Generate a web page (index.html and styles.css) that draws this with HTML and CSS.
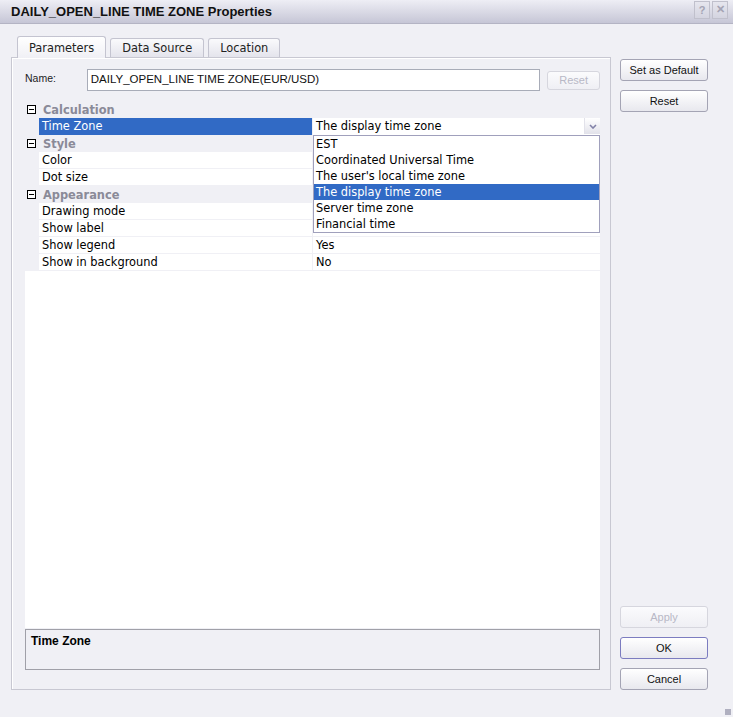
FILE: index.html
```html
<!DOCTYPE html>
<html lang="en">

<head>
    <meta charset="UTF-8">
    <meta name="viewport" content="width=device-width, initial-scale=1.0">
    <title>DAILY_OPEN_LINE TIME ZONE Properties</title>
    <link rel="stylesheet" href="styles.css">
</head>

<body>
    <div class="janela">
        <div class="barra-titulo">
            <span class="titulo">DAILY_OPEN_LINE TIME ZONE Properties</span>
            <div class="botoes-titulo">
                <span class="botao-titulo">?</span>
                <span class="botao-titulo">&#x2715;</span>
            </div>
        </div>

        <div class="corpo">
            <div class="area-abas">
                <div class="abas">
                    <div class="aba ativa">Parameters</div>
                    <div class="aba">Data Source</div>
                    <div class="aba">Location</div>
                </div>

                <div class="painel">
                    <div class="linha-nome">
                        <span class="rotulo-nome">Name:</span>
                        <div class="campo-nome">DAILY_OPEN_LINE TIME ZONE(EUR/USD)</div>
                        <button class="botao pequeno" disabled>Reset</button>
                    </div>

                    <div class="grade">
                        <div class="categoria"><span class="recolher"></span>Calculation</div>
                        <div class="propriedade selecionada">
                            <span class="nome">Time Zone</span>
                            <span class="valor combo">The display time zone
                                <span class="seta">
                                    <svg width="8" height="5" viewBox="0 0 8 5">
                                        <polyline points="1,1 4,4 7,1" fill="none" stroke="#8282a8" stroke-width="1.6"/>
                                    </svg>
                                </span>
                            </span>
                        </div>
                        <div class="categoria"><span class="recolher"></span>Style</div>
                        <div class="propriedade"><span class="nome">Color</span><span class="valor"></span></div>
                        <div class="propriedade"><span class="nome">Dot size</span><span class="valor"></span></div>
                        <div class="categoria"><span class="recolher"></span>Appearance</div>
                        <div class="propriedade"><span class="nome">Drawing mode</span><span class="valor"></span></div>
                        <div class="propriedade"><span class="nome">Show label</span><span class="valor"></span></div>
                        <div class="propriedade"><span class="nome">Show legend</span><span class="valor">Yes</span></div>
                        <div class="propriedade"><span class="nome">Show in background</span><span class="valor">No</span></div>

                        <!-- lista aberta do combo de fuso horário -->
                        <div class="lista">
                            <div class="item">EST</div>
                            <div class="item">Coordinated Universal Time</div>
                            <div class="item">The user's local time zone</div>
                            <div class="item marcado">The display time zone</div>
                            <div class="item">Server time zone</div>
                            <div class="item">Financial time</div>
                        </div>
                    </div>

                    <div class="descricao">Time Zone</div>
                </div>
            </div>

            <div class="lateral">
                <div class="grupo">
                    <button class="botao">Set as Default</button>
                    <button class="botao">Reset</button>
                </div>
                <div class="grupo">
                    <button class="botao" disabled>Apply</button>
                    <button class="botao padrao">OK</button>
                    <button class="botao">Cancel</button>
                </div>
            </div>
        </div>

        <div class="alca"></div>
    </div>
</body>
</html>
```

FILE: styles.css
```css
* {
    box-sizing: border-box;
}

body {
    margin: 0;
    background-color: #f0f0f5;
    font-family: "Liberation Sans", Arial, sans-serif;
}

.janela {
    width: 733px;
    height: 717px;
    background-color: #f0f0f5;
    position: relative;
}

.barra-titulo {
    height: 24px;
    display: flex;
    align-items: center;
    justify-content: space-between;
    padding: 0 5px 0 11px;
    background: linear-gradient(#eeeef5, #c6c6d6);
    border-bottom: 1px solid #b4b4c4;
}

.titulo {
    font-weight: bold;
    font-size: 13px;
    color: #111;
}

.botoes-titulo {
    display: flex;
    gap: 2px;
    margin-top: -4px;
}

.botao-titulo {
    width: 16px;
    height: 18px;
    border: 1px solid #c0c0cc;
    background: linear-gradient(#e6e6ee, #d4d4e0);
    color: #a4a4b4;
    font-weight: bold;
    font-size: 11px;
    display: flex;
    align-items: center;
    justify-content: center;
}

.corpo {
    display: flex;
    gap: 9px;
    padding: 12px 0 0 11px;
}

.area-abas {
    width: 600px;
    height: 654px;
    display: flex;
    flex-direction: column;
}

.abas {
    height: 21px;
    display: flex;
    align-items: flex-end;
    padding-left: 6px;
    gap: 4px;
}

.aba {
    height: 19px;
    padding: 0 11px;
    border: 1px solid #c4c4d0;
    border-bottom: 0;
    border-radius: 3px 3px 0 0;
    background: linear-gradient(#fafafc, #e4e4ec);
    font-family: "DejaVu Sans", sans-serif;
    font-size: 11.4px;
    color: #222;
    display: flex;
    align-items: center;
}

.aba.ativa {
    height: 22px;
    margin-bottom: -1px;
    background: linear-gradient(#ffffff, #f0f0f5);
    position: relative;
    z-index: 1;
}

.painel {
    flex: 1;
    border: 1px solid #c8c8d2;
    box-shadow: inset 1px 1px 0 #ffffff;
    padding: 11px 10px 19px 13px;
    display: flex;
    flex-direction: column;
}

.linha-nome {
    height: 22px;
    display: flex;
    align-items: center;
}

.rotulo-nome {
    width: 62px;
    font-size: 10.5px;
    color: #222;
    margin-top: -4px;
}

.campo-nome {
    width: 455px;
    height: 22px;
    border: 1px solid #a8acb8;
    background-color: #fff;
    font-size: 11.5px;
    padding: 3px 3px;
    color: #111;
}

.botao {
    width: 88px;
    height: 22px;
    border: 1px solid #a4a4b4;
    border-radius: 3px;
    background: linear-gradient(#ffffff, #e8e8ee);
    font-family: "Liberation Sans", Arial, sans-serif;
    font-size: 11px;
    color: #111;
    padding: 0;
}

.botao:disabled {
    color: #b8b8c6;
    border-color: #d6d6de;
    background: linear-gradient(#fbfbfd, #efeff4);
}

.botao.pequeno {
    width: 53px;
    height: 19px;
    margin-left: 7px;
}

.botao.padrao {
    border-color: #7c7cc0;
}

.grade {
    flex: 1;
    margin-top: 10px;
    background-color: #fff;
    position: relative;
    font-family: "DejaVu Sans", sans-serif;
    font-size: 11.4px;
    color: #000;
}

.categoria {
    height: 17px;
    display: flex;
    align-items: center;
    background-color: #f0f0f5;
    color: #8a8a98;
    font-weight: bold;
}

.recolher {
    width: 9px;
    height: 9px;
    margin: 0 7px 0 2px;
    border: 1px solid #000;
    background-color: #fff;
    position: relative;
}

.recolher::after {
    content: "";
    position: absolute;
    left: 1px;
    right: 1px;
    top: 3px;
    height: 1px;
    background-color: #000;
}

.propriedade {
    height: 17px;
    display: flex;
    padding-left: 14px;
    background-color: #f0f0f5;
    border-bottom: 1px solid #f0f0f5;
}

.propriedade .nome {
    width: 273px;
    margin-right: 1px;
    background-color: #fff;
    padding-left: 3px;
    line-height: 16px;
}

.propriedade .valor {
    flex: 1;
    background-color: #fff;
    padding-left: 3px;
    line-height: 16px;
}

.propriedade.selecionada {
    border-bottom: 0;
}

.propriedade.selecionada .nome {
    background-color: #316ac5;
    color: #fff;
    line-height: 17px;
}

.combo {
    display: flex;
    justify-content: space-between;
    line-height: 17px !important;
}

.seta {
    width: 16px;
    height: 16px;
    border-left: 1px solid #e2e2ea;
    background: linear-gradient(#ffffff, #e2e2ea);
    display: flex;
    align-items: center;
    justify-content: center;
}

.lista {
    position: absolute;
    left: 288px;
    top: 34px;
    width: 287px;
    border: 1px solid #a0a0bc;
    background-color: #fff;
}

.item {
    height: 16px;
    line-height: 16px;
    padding-left: 2px;
}

.item.marcado {
    background-color: #316ac5;
    color: #fff;
}

.descricao {
    height: 41px;
    margin-top: 1px;
    border: 1px solid #a0a0a8;
    background-color: #f0f0f5;
    padding: 4px 5px;
    font-weight: bold;
    font-size: 12px;
    color: #000;
}

.lateral {
    width: 88px;
    height: 654px;
    padding-top: 23px;
    display: flex;
    flex-direction: column;
    justify-content: space-between;
}

.grupo {
    display: flex;
    flex-direction: column;
    gap: 9px;
}

.alca {
    position: absolute;
    right: 2px;
    bottom: 2px;
    width: 6px;
    height: 6px;
    background: radial-gradient(circle, #b0b0c0 0.8px, transparent 1px) 0 0 / 2px 2px;
}
```
